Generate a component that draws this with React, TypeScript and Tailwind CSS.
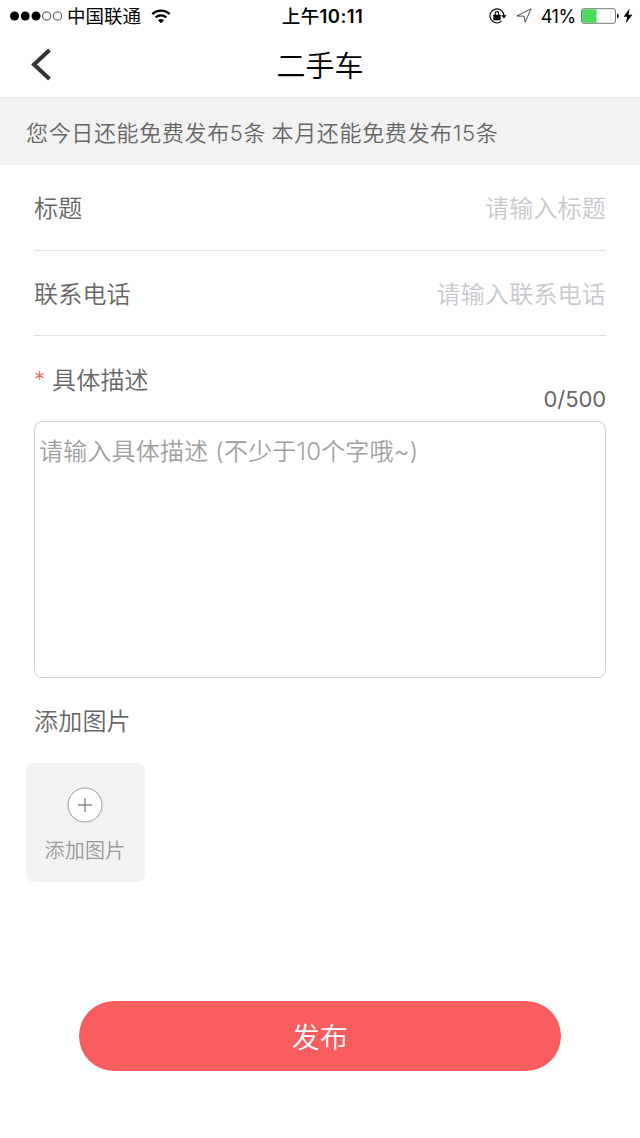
import React, { useState } from "react";

const MAX_LENGTH = 500;

function SignalDots() {
  return (
    <svg width="53" height="10" viewBox="0 0 53 10" fill="none">
      <circle cx="5.5" cy="5" r="4.5" fill="#000" />
      <circle cx="16.2" cy="5" r="4.5" fill="#000" />
      <circle cx="27" cy="5" r="4.5" fill="#000" />
      <circle cx="37.7" cy="5" r="4.1" stroke="#000" strokeWidth="0.7" />
      <circle cx="48.5" cy="5" r="4.1" stroke="#000" strokeWidth="0.7" />
    </svg>
  );
}

function WifiIcon() {
  return (
    <svg width="20" height="15" viewBox="0 0 20 15" fill="none">
      <path d="M1.3 5.2a12.6 12.6 0 0 1 17.4 0" stroke="#000" strokeWidth="2.3" />
      <path d="M4.6 8.5a8 8 0 0 1 10.8 0" stroke="#000" strokeWidth="2.2" />
      <path d="M7 11.2a4.6 4.6 0 0 1 6 0L10 14.2z" fill="#000" />
    </svg>
  );
}

function LockIcon() {
  return (
    <svg width="18" height="16" viewBox="0 0 18 16" fill="none">
      <path d="M12.6 13.2A7 7 0 1 1 15 8" stroke="#000" strokeWidth="1.1" />
      <path d="M12.2 7.3h5.4l-2.7 3.2z" fill="#000" />
      <rect x="4.4" y="6.8" width="7.2" height="5.4" rx="0.5" fill="#000" />
      <path d="M6.2 7.2V5.4a1.8 1.8 0 0 1 3.6 0v1.8" stroke="#000" strokeWidth="1.1" />
    </svg>
  );
}

function LocationIcon() {
  return (
    <svg width="16" height="16" viewBox="0 0 16 16" fill="none">
      <path
        d="M15 0.8 9.2 14.3 8.1 8.2 0.9 8z"
        stroke="#222"
        strokeWidth="0.8"
        strokeLinejoin="round"
      />
    </svg>
  );
}

function BatteryIcon() {
  return (
    <svg width="39" height="16" viewBox="0 0 39 16" fill="none">
      <rect x="0.5" y="0.7" width="34" height="14.6" rx="2.2" stroke="#555" strokeWidth="0.8" />
      <path d="M2.4 1.2H15.6V14.8H2.4a1.4 1.4 0 0 1-1.4-1.4V2.6a1.4 1.4 0 0 1 1.4-1.4z" fill="#4cd95f" />
      <path d="M36 5.5a2.6 2.6 0 0 1 0 5z" fill="#000" />
    </svg>
  );
}

function BoltIcon() {
  return (
    <svg width="10" height="16" viewBox="0 0 10 16">
      <path d="M6.6 0.5 0.6 8.7h3.6L2.8 15.3 9.4 6.7H5.5z" fill="#000" />
    </svg>
  );
}

function StatusBar() {
  return (
    <div className="grid h-8 grid-cols-[1fr_auto_1fr] items-center pl-[9px] pr-[7px] font-normal leading-none text-black">
      <div className="flex items-center">
        <SignalDots />
        <span className="ml-[5px] pt-px text-[18.5px]">中国联通</span>
        <span className="ml-[10px]">
          <WifiIcon />
        </span>
      </div>
      <span className="pl-[3px] pt-px text-[18.5px] font-semibold tracking-[0.4px]">
        <span className="font-medium">上午</span>10:11
      </span>
      <div className="flex items-center justify-end">
        <LockIcon />
        <span className="ml-[9px]">
          <LocationIcon />
        </span>
        <span className="ml-[9px] pt-px text-[18px] tracking-[-0.3px]">41%</span>
        <span className="ml-[5px]">
          <BatteryIcon />
        </span>
        <span className="ml-[3px]">
          <BoltIcon />
        </span>
      </div>
    </div>
  );
}

function NavBar({ title }: { title: string }) {
  return (
    <header className="grid h-[66px] grid-cols-[1fr_auto_1fr] items-center border-b border-[#e2e2e2]">
      <button className="pl-[31px]" aria-label="返回">
        <svg width="21" height="34" viewBox="0 0 21 34" fill="none">
          <path d="M18.5 2 3 16.5 18.5 31" stroke="#333" strokeWidth="4" />
        </svg>
      </button>
      <h1 className="pt-[3px] text-[29px] leading-none text-black">{title}</h1>
    </header>
  );
}

function Field({ label, placeholder }: { label: string; placeholder: string }) {
  return (
    <label className="flex h-[85.5px] items-center justify-between border-b border-[#e3e3e3] pt-1">
      <span>{label}</span>
      <input
        className="w-80 bg-transparent text-right outline-none placeholder:text-[#c8c8cd]"
        placeholder={placeholder}
      />
    </label>
  );
}

export default function App() {
  const [description, setDescription] = useState("");

  return (
    <div className="h-[1138px] w-[640px] bg-white font-['Inter','Noto_Sans_CJK_SC',sans-serif] font-[350] text-[#666]">
      <StatusBar />
      <NavBar title="二手车" />

      <p className="flex h-[67px] items-center bg-[#f2f2f2] pl-[26px] pt-[3px] text-[22px] tracking-[0.65px] [word-spacing:-1.5px]">
        您今日还能免费发布5条 本月还能免费发布15条
      </p>

      <form className="px-[34px] text-[24px] leading-9 tracking-[0.2px]">
        <Field label="标题" placeholder="请输入标题" />
        <Field label="联系电话" placeholder="请输入联系电话" />

        <div className="flex h-[85px] items-start justify-between pt-[27px]">
          <label className="flex items-center gap-2">
            <span className="-mt-1 w-[10px] text-[22px] text-[#f75c5e]">*</span>
            具体描述
          </label>
          <span className="mt-[18px] text-[22px] font-normal tracking-[-0.1px]">
            {description.length}/{MAX_LENGTH}
          </span>
        </div>
        <textarea
          className="block h-[257px] w-full resize-none rounded-lg border border-[#d2d2d2] px-1 py-3 outline-none placeholder:text-[#a0a0a0]"
          placeholder="请输入具体描述 (不少于10个字哦~)"
          maxLength={MAX_LENGTH}
          value={description}
          onChange={(e) => setDescription(e.target.value)}
        />

        <h2 className="mt-[26px]">添加图片</h2>
        <button
          type="button"
          className="-ml-2 mt-[23px] flex h-[119px] w-[119px] flex-col items-center rounded-lg bg-[#f2f2f2] pr-px pt-6 text-[20px] text-[#999]"
        >
          <svg width="36" height="36" viewBox="0 0 36 36" fill="none">
            <circle cx="18" cy="18" r="17" fill="#fff" stroke="#999" />
            <path d="M18 11v14M11 18h14" stroke="#888" strokeWidth="1.4" />
          </svg>
          <span className="mt-[10px] leading-9">添加图片</span>
        </button>

        <button
          type="submit"
          className="ml-[45px] mt-[119px] flex h-[70px] w-[482px] items-center justify-center rounded-full bg-[#f75c5e] pt-[3px] text-[28px] text-white"
        >
          发布
        </button>
      </form>
    </div>
  );
}
